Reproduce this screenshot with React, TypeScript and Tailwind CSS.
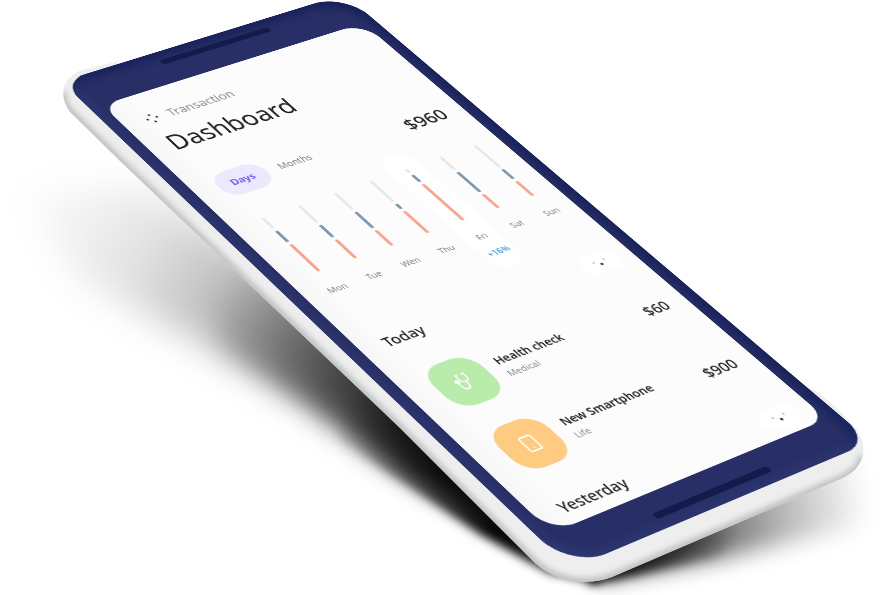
import React from "react";
import { Smartphone } from "lucide-react";

type Point = [number, number];

const SCREEN_W = 360;
const SCREEN_H = 720;
const BEZEL_X = 16;
const BEZEL_TOP = 53;

/** Where the four corners of the display land in the scene: TL, TR, BR, BL. */
const CORNERS: [Point, Point, Point, Point] = [
  [102, 105],
  [363, 23],
  [827, 419],
  [552, 533],
];

/** Perspective matrix that projects a w × h rectangle onto four corners. */
function project(w: number, h: number, [p0, p1, p2, p3]: Point[]): string {
  const dx1 = p1[0] - p2[0];
  const dx2 = p3[0] - p2[0];
  const sx = p0[0] - p1[0] + p2[0] - p3[0];
  const dy1 = p1[1] - p2[1];
  const dy2 = p3[1] - p2[1];
  const sy = p0[1] - p1[1] + p2[1] - p3[1];
  const det = dx1 * dy2 - dx2 * dy1;
  const g = (sx * dy2 - dx2 * sy) / det;
  const k = (dx1 * sy - sx * dy1) / det;
  const m = [
    (p1[0] - p0[0] + g * p1[0]) / w,
    (p1[1] - p0[1] + g * p1[1]) / w,
    0,
    g / w,
    (p3[0] - p0[0] + k * p3[0]) / h,
    (p3[1] - p0[1] + k * p3[1]) / h,
    0,
    k / h,
    0,
    0,
    1,
    0,
    p0[0],
    p0[1],
    0,
    1,
  ];
  return `matrix3d(${m.map((n) => n.toFixed(8)).join(",")})`;
}

type Day = { label: string; rest: number; blue: number; coral: number; change?: string };

/** Segment lengths of each bar; the segments and two 4px gaps add up to 94px. */
const WEEK: Day[] = [
  { label: "Mon", rest: 19, blue: 20, coral: 47 },
  { label: "Tue", rest: 31, blue: 22, coral: 33 },
  { label: "Wen", rest: 30, blue: 29, coral: 27 },
  { label: "Thu", rest: 38, blue: 9, coral: 39 },
  { label: "Fri", rest: 7, blue: 13, coral: 66, change: "+16%" },
  { label: "Sat", rest: 24, blue: 37, coral: 25 },
  { label: "Sun", rest: 41, blue: 18, coral: 27 },
];

function StethoscopeIcon() {
  return (
    <svg viewBox="0 0 24 24" className="size-6" fill="none" stroke="#fff" strokeWidth="1.8" strokeLinecap="round" strokeLinejoin="round" aria-hidden="true">
      <path d="M11 2H9v5c0 3.2 2 5.500 5 5.500s5-2.300 5-5.500V2h-2" />
      <path d="M14 12.500V16c0 3.500-1.800 6-4.800 6S5 19.500 5 16v-3" />
      <circle cx="5" cy="10" r="2" fill="#fff" />
    </svg>
  );
}

function MenuDots() {
  return (
    <svg viewBox="0 0 16 16" className="size-4" fill="#222" aria-hidden="true">
      <circle cx="8" cy="2" r="1.400" />
      <circle cx="14" cy="8" r="1.400" />
      <circle cx="8" cy="14" r="1.400" />
      <circle cx="2" cy="8" r="1.400" />
    </svg>
  );
}

function ExpandButton({ label }: { label: string }) {
  return (
    <button type="button" aria-label={label} className="flex h-7 w-12 items-center justify-center rounded-[14px] bg-white">
      <svg viewBox="0 0 18 10" className="h-[10px] w-[18px]" aria-hidden="true">
        <circle cx="2" cy="2" r="1.400" fill="#c4c4c4" />
        <circle cx="16" cy="2" r="1.400" fill="#c4c4c4" />
        <circle cx="9" cy="7" r="1.700" fill="#222" />
      </svg>
    </button>
  );
}

function Section({ title }: { title: string }) {
  return (
    <div className="flex h-7 items-center justify-between pr-[18px] pl-[29px]">
      <h2 className="text-[18px] leading-7 font-medium text-[#222]">{title}</h2>
      <ExpandButton label={`Expand ${title}`} />
    </div>
  );
}

function Entry({ tint, icon, title, kind, amount }: { tint: string; icon: React.ReactNode; title: string; kind: string; amount: string }) {
  return (
    <li className="flex items-center gap-4 pr-6 pl-[33px]">
      <span className={`flex size-16 items-center justify-center rounded-3xl ${tint}`}>{icon}</span>
      <div className="flex-1 pt-px">
        <p className="text-[14px] leading-5 font-semibold text-[#222]">{title}</p>
        <p className="text-[11px] leading-5 text-[#8c8c8c]">{kind}</p>
      </div>
      <p className="text-[18px] leading-6 font-medium text-[#222]">{amount}</p>
    </li>
  );
}

function Chart() {
  return (
    <ul className="mt-[14px] grid grid-cols-7 pr-2 pl-4">
      {WEEK.map((day) => (
        <li key={day.label} className={`mx-1 flex flex-col items-center rounded-[20px] pt-6 pb-4 ${day.change ? "bg-white" : ""}`}>
          <div className="flex flex-col gap-1">
            <span className="w-1 rounded-full bg-[#e9e9e9]" style={{ height: day.rest }} />
            <span className="w-1 rounded-full bg-[#7d9cb3]" style={{ height: day.blue }} />
            <span className="w-1 rounded-full bg-[#ffa48c]" style={{ height: day.coral }} />
          </div>
          <span className="mt-5 text-[11px] leading-[18px] text-[#808080]">{day.label}</span>
          {day.change && <span className="mt-2 text-[11px] leading-[18px] font-medium text-[#2f9bf0]">{day.change}</span>}
        </li>
      ))}
    </ul>
  );
}

function Shadow() {
  return (
    <svg viewBox="0 0 888 595" className="absolute inset-0 h-full w-full" aria-hidden="true">
      <defs>
        <linearGradient id="far" gradientUnits="userSpaceOnUse" x1="10" y1="190" x2="400" y2="430">
          <stop offset="0" stopColor="#000" stopOpacity="0" />
          <stop offset="0.300" stopColor="#000" stopOpacity="0.100" />
          <stop offset="0.600" stopColor="#000" stopOpacity="0.320" />
          <stop offset="1" stopColor="#000" stopOpacity="0.650" />
        </linearGradient>
        <linearGradient id="near" gradientUnits="userSpaceOnUse" x1="210" y1="290" x2="450" y2="470">
          <stop offset="0" stopColor="#000" stopOpacity="0" />
          <stop offset="1" stopColor="#000" stopOpacity="0.850" />
        </linearGradient>
        <linearGradient id="contact" gradientUnits="userSpaceOnUse" x1="350" y1="400" x2="500" y2="520">
          <stop offset="0" stopColor="#000" stopOpacity="0" />
          <stop offset="1" stopColor="#000" stopOpacity="0.950" />
        </linearGradient>
        <linearGradient id="side" gradientUnits="userSpaceOnUse" x1="600" y1="560" x2="870" y2="500">
          <stop offset="0" stopColor="#000" stopOpacity="0.950" />
          <stop offset="0.350" stopColor="#000" stopOpacity="0.650" />
          <stop offset="0.700" stopColor="#000" stopOpacity="0.260" />
          <stop offset="1" stopColor="#000" stopOpacity="0" />
        </linearGradient>
        <linearGradient id="edge" gradientUnits="userSpaceOnUse" x1="600" y1="575" x2="740" y2="540">
          <stop offset="0" stopColor="#000" stopOpacity="1" />
          <stop offset="1" stopColor="#000" stopOpacity="0" />
        </linearGradient>
        <filter id="soft" x="-20%" y="-20%" width="140%" height="140%">
          <feGaussianBlur stdDeviation="18" />
        </filter>
        <filter id="mid" x="-20%" y="-20%" width="140%" height="140%">
          <feGaussianBlur stdDeviation="11" />
        </filter>
        <filter id="tight" x="-20%" y="-20%" width="140%" height="140%">
          <feGaussianBlur stdDeviation="5" />
        </filter>
      </defs>
      <path d="M20 190 L150 190 L480 400 L480 490 L400 455 L300 395 L200 340 L80 280Z" fill="url(#far)" filter="url(#soft)" />
      <path d="M200 250 L480 400 L560 560 L480 520 L400 472 L300 400 L220 350Z" fill="url(#near)" filter="url(#mid)" />
      <path d="M340 350 L560 480 L600 583 L550 573 L480 534 L400 480 L340 440Z" fill="url(#contact)" filter="url(#tight)" />
      <path d="M570 540 L740 460 L870 450 L860 525 L720 558 L600 578Z" fill="url(#side)" filter="url(#mid)" />
      <path d="M580 550 L700 490 L740 530 L720 556 L640 574 L590 584Z" fill="url(#edge)" filter="url(#tight)" />
    </svg>
  );
}

function Casing() {
  const outline =
    "M116 62 L82 70 C62 77 58 96 70 112 L119 160 L400 428 L535 563 C555 581 584 587 612 577 L843 478 C862 469 867 452 861 438 C856 426 842 412 818 392 L600 300Z";
  return (
    <svg viewBox="0 0 888 595" className="absolute inset-0 h-full w-full" aria-hidden="true">
      <defs>
        <clipPath id="casing">
          <path d={outline} />
        </clipPath>
        <filter id="rim">
          <feGaussianBlur stdDeviation="3" />
        </filter>
      </defs>
      <path d={outline} fill="#eeeeef" />
      <g clipPath="url(#casing)">
        <path
          d="M63 92 C62 102 65 107 70 112 L119 160 L400 428 L535 563 C555 581 584 587 612 577 L843 478 C854 473 861 466 863 456"
          fill="none"
          stroke="#b4b9b8"
          strokeWidth="7"
          filter="url(#rim)"
        />
      </g>
    </svg>
  );
}

export default function App() {
  return (
    <main className="min-h-screen overflow-hidden bg-white font-['Noto_Sans','Open_Sans',sans-serif]">
      <div className="relative aspect-[888/595] w-[888px]">
        <Shadow />
        <Casing />
        <div
          className="absolute top-0 left-0 flex origin-top-left flex-col items-center rounded-tl-[32px] rounded-tr-[44px] rounded-br-[32px] rounded-bl-[44px] bg-[#272f66] px-4 shadow-[inset_-8px_8px_14px_#19215a,inset_6px_-6px_12px_#303a72] outline-2 outline-transparent"
          style={{
            transform: `${project(SCREEN_W, SCREEN_H, CORNERS)} translate(${-BEZEL_X}px, ${-BEZEL_TOP}px)`,
          }}
        >
          <div className="flex h-[53px] items-start pt-[14px]">
            <span className="h-2 w-[150px] rounded-full bg-[#141b4b]" />
          </div>
          <div className="h-[720px] w-[360px] overflow-hidden rounded-tl-[22px] rounded-tr-[30px] rounded-br-[22px] rounded-bl-[30px] bg-[#fcfcfc] bg-linear-to-r from-[#f6f6f6] via-[#fcfcfc] via-10% to-[#fcfcfc]">
            <header className="px-7 pt-[30px]">
              <div className="flex items-center gap-[13px]">
                <MenuDots />
                <p className="text-[16px] leading-6 text-[#8c8c8c]">Transaction</p>
              </div>
              <h1 className="mt-3 -ml-0.5 text-[32px] leading-10 font-normal text-[#222]">Dashboard</h1>
            </header>
            <div className="mt-[42px] flex items-start justify-between pr-6 pl-[29px]">
              <div className="flex items-center gap-4">
                <button type="button" className="h-10 w-16 rounded-full bg-[#ece8fd] text-[13px] font-semibold text-[#6a4cf5]">
                  Days
                </button>
                <button type="button" className="text-[12px] text-[#808080]">
                  Months
                </button>
              </div>
              <p className="text-[24px] leading-[42px] font-medium text-[#222]">$960</p>
            </div>
            <Chart />
            <section className="mt-[22px]">
              <Section title="Today" />
              <ul className="mt-[34px] flex flex-col gap-[34px]">
                <Entry tint="bg-[#b9ebab]" icon={<StethoscopeIcon />} title="Health check" kind="Medical" amount="$60" />
                <Entry
                  tint="bg-[#ffcb80]"
                  icon={<Smartphone className="size-6 text-white" strokeWidth={1.8} />}
                  title="New Smartphone"
                  kind="Life"
                  amount="$900"
                />
              </ul>
            </section>
            <section className="mt-9">
              <Section title="Yesterday" />
            </section>
          </div>
          <div className="flex h-11 items-center pt-[10px]">
            <span className="h-2 w-[150px] rounded-full bg-[#141b4b]" />
          </div>
        </div>
      </div>
    </main>
  );
}
